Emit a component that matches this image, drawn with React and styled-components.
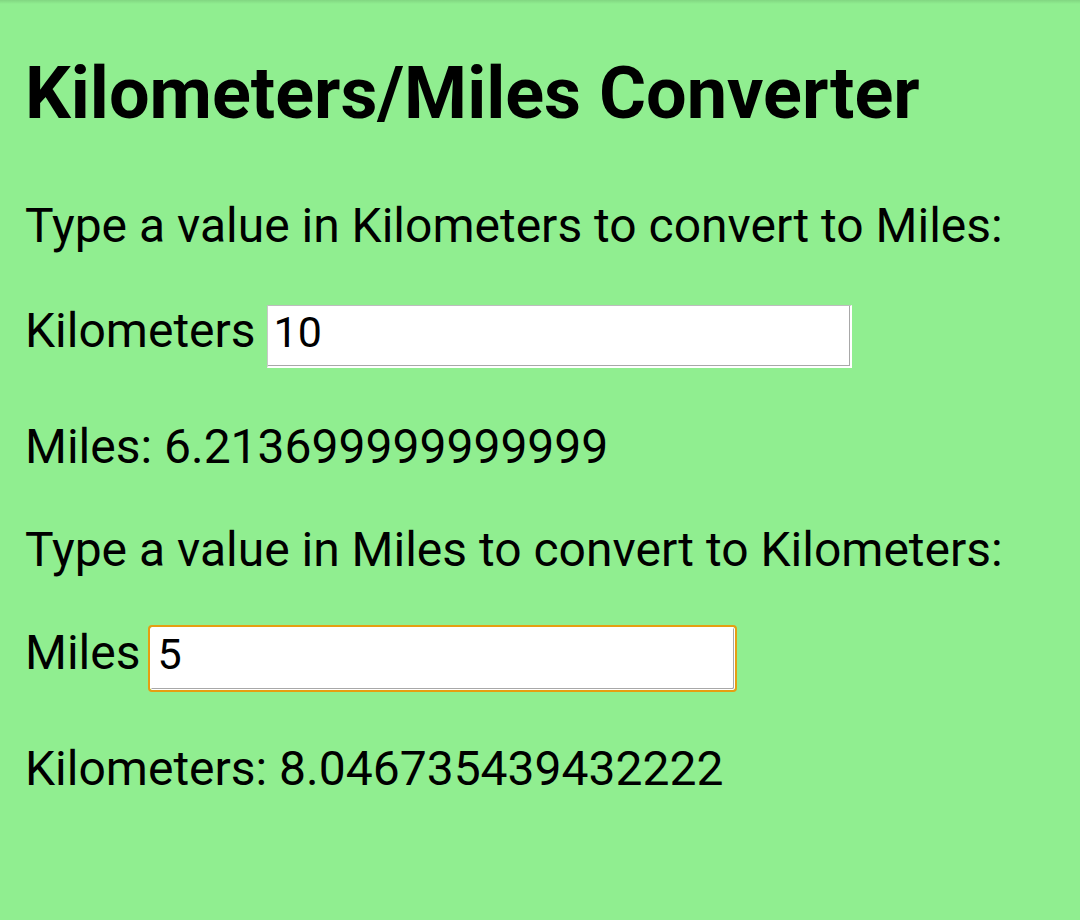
import React, { useState } from "react";
import styled, { createGlobalStyle } from "styled-components";

const Global = createGlobalStyle`
  html, body {
    margin: 0;
    padding: 0;
    background: #90ee90;
  }
  body {
    min-height: 100vh;
    background: linear-gradient(rgba(0, 0, 0, 0.1), rgba(0, 0, 0, 0) 4px) no-repeat, #90ee90;
    font-family: Roboto, "Noto Sans", Arial, sans-serif;
    color: #000;
  }
`;

const Page = styled.main`
  padding: 58px 25px 0;
  display: flex;
  flex-direction: column;
`;

const Title = styled.h1`
  margin: 0;
  font-size: 72px;
  line-height: 72px;
  font-weight: 700;
`;

const Text = styled.p`
  margin: ${(p) => p.$top}px 0 0;
  font-size: 48px;
  line-height: 56px;
  white-space: nowrap;
`;

const Row = styled.div`
  display: flex;
  align-items: baseline;
  gap: ${(p) => p.$gap}px;
  margin-top: ${(p) => p.$top}px;
`;

const Label = styled.label`
  font-size: 48px;
  line-height: 56px;
`;

const Field = styled.input`
  box-sizing: border-box;
  width: 585px;
  height: 63px;
  margin: 0;
  padding: 0 6px 8px;
  font-family: Roboto, "Noto Sans", Arial, sans-serif;
  font-size: 43px;
  color: #000;
  background: #fff;
  border-top: 1px solid #bdbdbd;
  border-left: 1px solid #c8c8c8;
  border-right: 2px solid #fff;
  border-bottom: 2px solid #fff;
  border-radius: 0;
  box-shadow: inset -1px -1px 0 #a8a8a8;
  outline: none;
  ${(p) =>
    p.$focused &&
    `
    border: 1px solid #fff;
    border-radius: 2px;
    outline: 2px solid #e69e12;
    outline-offset: 0;
  `}
`;

export default function App() {
  const [km, setKm] = useState("10");
  const [mi, setMi] = useState("5");
  return (
    <>
      <Global />
      <Page>
        <Title>Kilometers/Miles Converter</Title>
        <Text $top={68}>Type a value in Kilometers to convert to Miles:</Text>
        <Row $top={49} $gap={11}>
          <Label htmlFor="km">Kilometers</Label>
          <Field id="km" value={km} onChange={(e) => setKm(e.target.value)} />
        </Row>
        <Text $top={51}>Miles: 6.213699999999999</Text>
        <Text $top={47}>Type a value in Miles to convert to Kilometers:</Text>
        <Row $top={47} $gap={10}>
          <Label htmlFor="mi">Miles</Label>
          <Field id="mi" $focused value={mi} onChange={(e) => setMi(e.target.value)} />
        </Row>
        <Text $top={51}>Kilometers: 8.046735439432222</Text>
      </Page>
    </>
  );
}
